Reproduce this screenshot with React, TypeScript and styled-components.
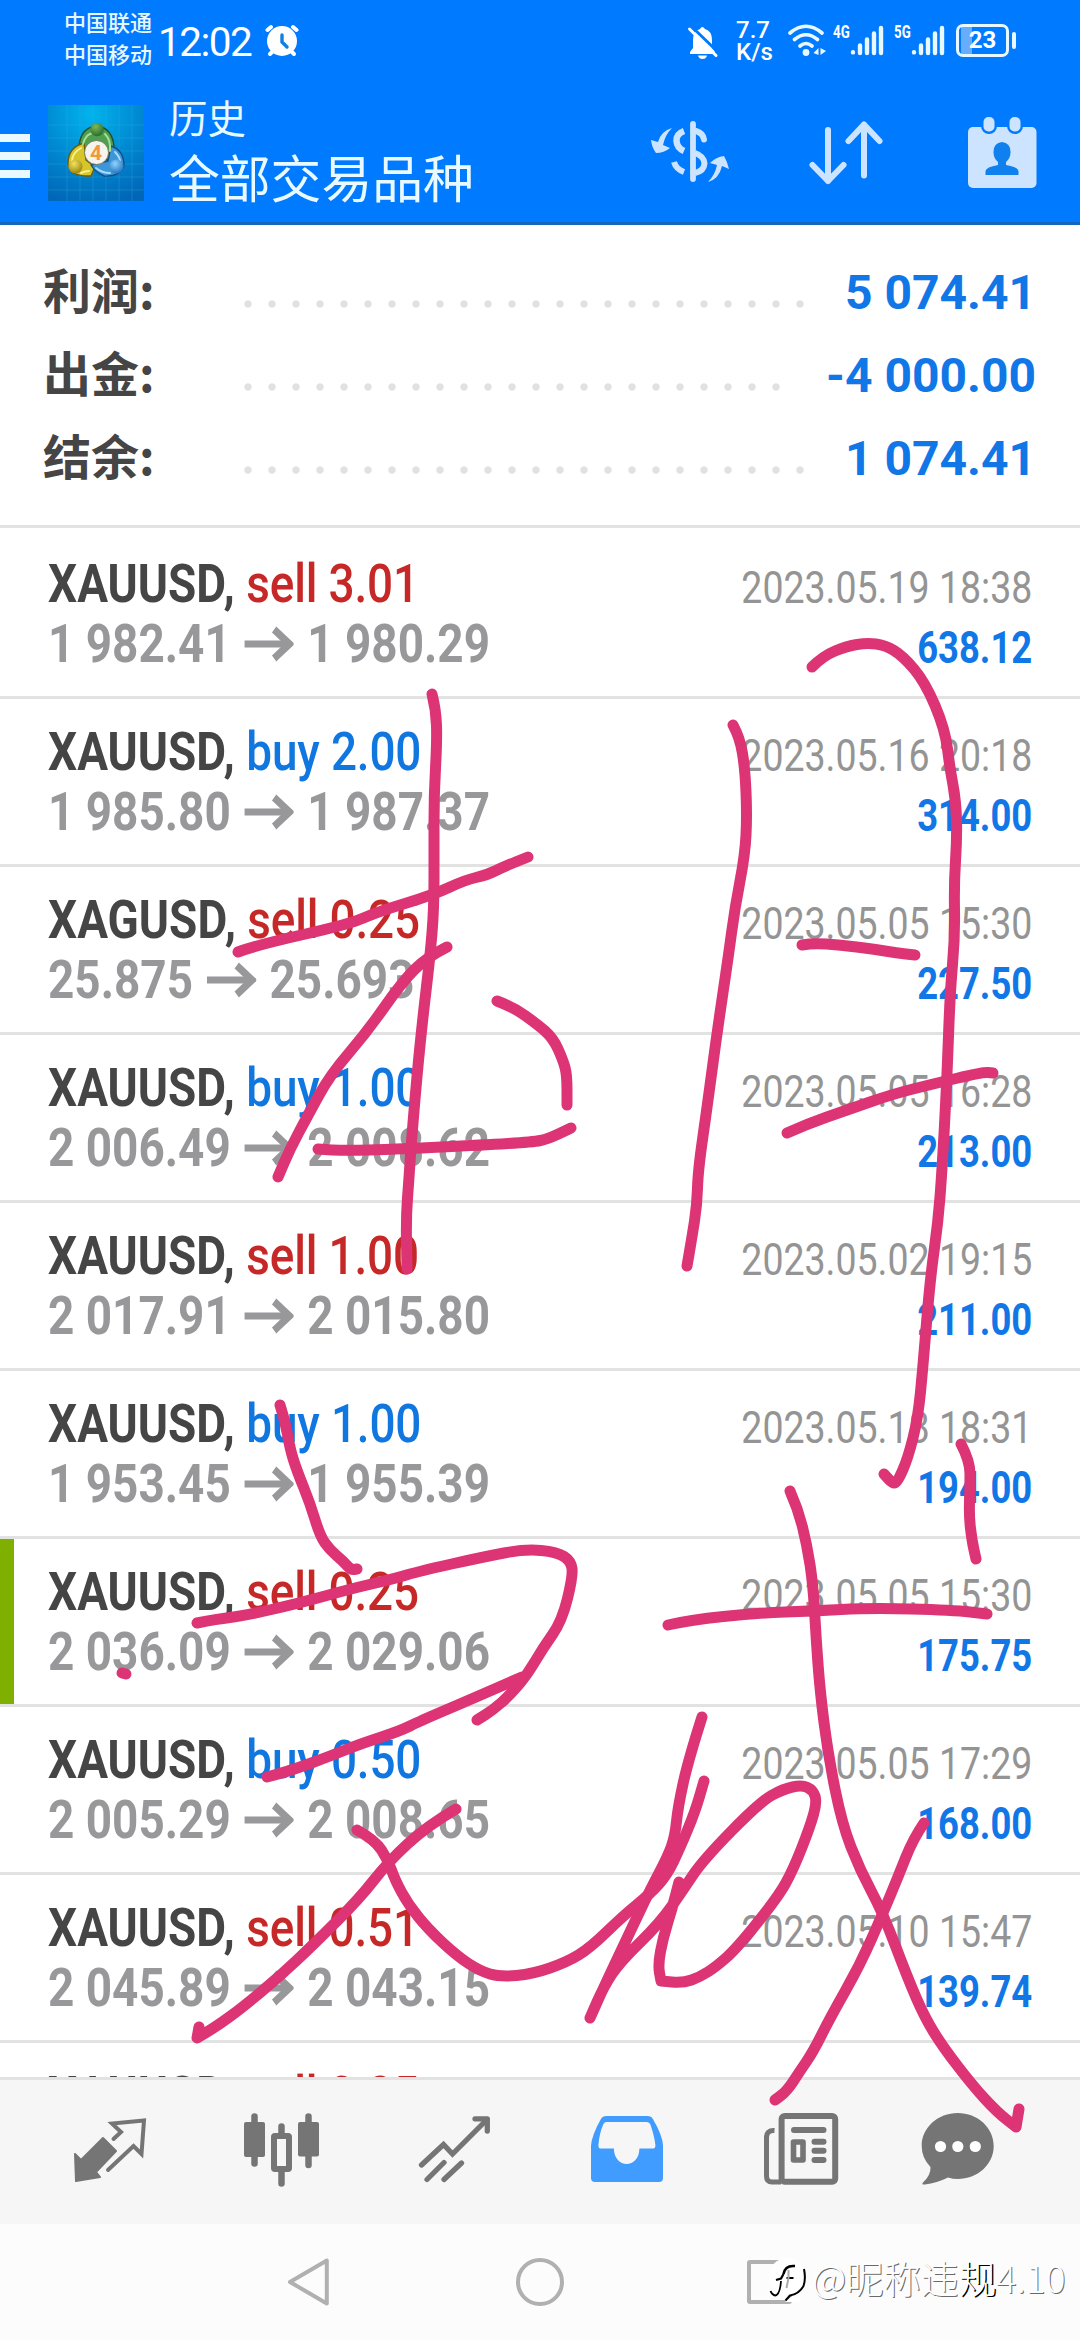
import React from "react";
import styled, { createGlobalStyle } from "styled-components";

const Global = createGlobalStyle`
  html, body { margin: 0; padding: 0; background: #fff; }
  * { box-sizing: border-box; }
  svg { display: block; flex: none; }
`;

const Screen = styled.div`
  position: relative;
  width: 1080px;
  height: 2340px;
  display: flex;
  flex-direction: column;
  overflow: hidden;
  background: #fff;
  font-family: Roboto, "Noto Sans CJK SC", sans-serif;
`;

/* ---------- header ---------- */
const Header = styled.header`
  height: 225px;
  flex: none;
  background: #007aff;
  border-bottom: 3px solid #1568bd;
  color: #fff;
`;
const StatusBar = styled.div`
  height: 84px;
  display: flex;
  align-items: flex-start;
  padding: 8px 0 0 64px;
`;
const Carriers = styled.div`
  width: 94px;
  font-size: 22px;
  line-height: 32px;
  font-weight: 500;
  color: #e8f8ff;
  white-space: nowrap;
`;
const Clock = styled.div`
  width: 107px;
  padding-top: 10px;
  font-size: 40.5px;
  line-height: 48px;
  letter-spacing: -1.5px;
`;
const AlarmWrap = styled.div`
  padding-top: 16px;
  width: 421px;
`;
const BellWrap = styled.div`
  padding-top: 16px;
  width: 50px;
`;
const Speed = styled.div`
  width: 51px;
  padding-top: 11px;
  font-size: 24px;
  line-height: 22px;
  font-weight: 500;
`;
const WifiWrap = styled.div`
  width: 46px;
  padding-top: 14px;
`;
const Signal = styled.div<{ $w: number }>`
  width: ${(p) => p.$w}px;
  display: flex;
  padding-top: 14px;
`;
const Gen = styled.span`
  width: 17px;
  font-size: 18.5px;
  line-height: 20px;
  font-weight: 700;
  transform: scaleX(0.72);
  transform-origin: 0 0;
`;
const Battery = styled.div`
  margin-top: 16px;
  width: 53px;
  height: 33px;
  border: 3px solid #e8f8ff;
  border-radius: 7px;
  display: flex;
  align-items: center;
  justify-content: center;
  font-size: 24px;
  font-weight: 700;
  line-height: 27px;
  background: linear-gradient(90deg, transparent 2px, #66aefc 2px, #66aefc 13px, transparent 13px);
`;
const BatteryTip = styled.div`
  margin: 24px 0 0 3px;
  width: 4px;
  height: 17px;
  border-radius: 2px;
  background: #e8f8ff;
`;
const AppBar = styled.div`
  height: 138px;
  display: flex;
  align-items: flex-start;
`;
const Burger = styled.div`
  width: 48px;
  padding-top: 50px;
  display: flex;
  flex-direction: column;
  gap: 10px;
`;
const BurgerLine = styled.span`
  width: 30px;
  height: 8px;
  background: #e8faff;
`;
const LogoWrap = styled.div`
  width: 121px;
  padding-top: 21px;
`;
const Titles = styled.div`
  width: 481px;
  padding-top: 8px;
  color: #e8faff;
`;
const Title = styled.div`
  font-size: 38.5px;
  line-height: 56px;
`;
const Subtitle = styled.div`
  font-size: 50.8px;
  line-height: 64px;
  margin-top: 1px;
`;
const Actions = styled.div`
  display: flex;
  gap: 76px;
  padding-top: 26px;
`;

/* ---------- totals ---------- */
const Totals = styled.section`
  height: 303px;
  flex: none;
  padding: 26px 0 0 43px;
  border-bottom: 3px solid #e2e2e2;
`;
const TotalRow = styled.div`
  height: 83px;
  display: flex;
  align-items: center;
`;
const TotalLabel = styled.div`
  width: 193px;
  font-family: "Noto Sans CJK SC", sans-serif;
  font-size: 48px;
  line-height: 70px;
  padding-bottom: 9px;
  font-weight: 700;
  color: #454545;
`;
const Dots = styled.div<{ $n: number }>`
  width: ${(p) => p.$n * 24}px;
  height: 10px;
  margin: 22px 0 0 0;
  background: radial-gradient(circle at 12px 5px, #e1e1e1 3.2px, transparent 4.2px) 0 0 / 24px 10px repeat-x;
`;
const TotalValue = styled.div<{ $gap: number }>`
  margin-left: ${(p) => p.$gap}px;
  font-size: 48px;
  line-height: 60px;
  font-weight: 700;
  color: #1177e6;
  white-space: nowrap;
`;

/* ---------- deals ---------- */
const List = styled.section`
  height: 1549px;
  flex: none;
  overflow: hidden;
  padding-top: 3px;
`;
const Deal = styled.article<{ $marked?: boolean }>`
  height: 168px;
  display: flex;
  justify-content: space-between;
  padding: 23px 48px 0 48px;
  border-bottom: 3px solid #e2e2e2;
  box-shadow: ${(p) => (p.$marked ? "inset 14px 0 0 #7fb000" : "none")};
`;
const Left = styled.div`
  transform: scaleX(0.85);
  transform-origin: 0 0;
  white-space: nowrap;
`;
const Right = styled.div`
  padding-top: 4px;
  text-align: right;
  white-space: nowrap;
`;
const Symbol = styled.div`
  font-size: 54px;
  line-height: 60px;
  font-weight: 700;
  color: #454545;
`;
const Side = styled.span<{ $buy: boolean }>`
  font-weight: 500;
  letter-spacing: -0.2px;
  color: ${(p) => (p.$buy ? "#1177e0" : "#c62828")};
`;
const Prices = styled.div`
  display: flex;
  align-items: center;
  font-size: 54px;
  line-height: 60px;
  font-weight: 700;
  color: #98989b;
`;
const PriceArrow = styled.svg`
  margin: 0 16px 0 16px;
`;
const When = styled.div`
  font-size: 45px;
  line-height: 60px;
  color: #949494;
  transform: scaleX(0.833);
  transform-origin: 100% 0;
`;
const Profit = styled.div`
  font-size: 45px;
  line-height: 59px;
  font-weight: 700;
  color: #1177e6;
  transform: scaleX(0.81);
  transform-origin: 100% 0;
`;

/* ---------- bottom ---------- */
const Tabs = styled.nav`
  height: 147px;
  flex: none;
  display: flex;
  gap: 92.4px;
  padding: 30px 0 0 70px;
  background: #f6f6f6;
  border-top: 3px solid #e2e2e2;
  & > svg:last-child { margin-left: -13.5px; }
`;
const SystemNav = styled.nav`
  flex: 1;
  background: #fcfcfc;
  display: flex;
  align-items: flex-start;
  padding: 28px 0 0 280px;
  gap: 170px;
`;
const Watermark = styled.div`
  position: absolute;
  left: 768px;
  top: 2250px;
  display: flex;
  align-items: center;
  font-family: "Noto Sans CJK SC", sans-serif;
  font-size: 37.5px;
  line-height: 54px;
  font-weight: 300;
  color: #fff;
  white-space: nowrap;
  text-shadow: 1px 1px 0 #6a6a6a;
`;
const WatermarkText = styled.span`
  margin-left: 4px;
`;
const Strong = styled.span`
  text-shadow: 1.5px 1px 0 #000;
`;
const Ink = styled.svg`
  position: absolute;
  left: 0;
  top: 0;
  pointer-events: none;
`;

type DealData = { s: string; side: string; vol: string; from: string; to: string; when: string; profit: string; marked?: boolean };
const deals: DealData[] = [
  { s: "XAUUSD", side: "sell", vol: "3.01", from: "1 982.41", to: "1 980.29", when: "2023.05.19 18:38", profit: "638.12" },
  { s: "XAUUSD", side: "buy", vol: "2.00", from: "1 985.80", to: "1 987.37", when: "2023.05.16 20:18", profit: "314.00" },
  { s: "XAGUSD", side: "sell", vol: "0.25", from: "25.875", to: "25.693", when: "2023.05.05 15:30", profit: "227.50" },
  { s: "XAUUSD", side: "buy", vol: "1.00", from: "2 006.49", to: "2 008.62", when: "2023.05.05 16:28", profit: "213.00" },
  { s: "XAUUSD", side: "sell", vol: "1.00", from: "2 017.91", to: "2 015.80", when: "2023.05.02 19:15", profit: "211.00" },
  { s: "XAUUSD", side: "buy", vol: "1.00", from: "1 953.45", to: "1 955.39", when: "2023.05.18 18:31", profit: "194.00" },
  { s: "XAUUSD", side: "sell", vol: "0.25", from: "2 036.09", to: "2 029.06", when: "2023.05.05 15:30", profit: "175.75", marked: true },
  { s: "XAUUSD", side: "buy", vol: "0.50", from: "2 005.29", to: "2 008.65", when: "2023.05.05 17:29", profit: "168.00" },
  { s: "XAUUSD", side: "sell", vol: "0.51", from: "2 045.89", to: "2 043.15", when: "2023.05.10 15:47", profit: "139.74" },
  { s: "XAUUSD", side: "sell", vol: "0.25", from: "", to: "", when: "", profit: "" },
];

const totals = [
  { label: "利润:", n: 24, gap: 33, value: "5 074.41" },
  { label: "出金:", n: 23, gap: 38, value: "-4 000.00" },
  { label: "结余:", n: 24, gap: 33, value: "1 074.41" },
];

const strokes = [
  "432,694 436,710 437,741 434,795 434,850 434,909 430,957 423,1016 417,1075 411,1147 409,1178 406,1218 407,1269",
  "238,952 257,945 350,924 377,912 433,895 465,880 487,875 503,867 528,857",
  "447,947 427,957 402,982 367,1032 330,1075 307,1117 290,1149 278,1177",
  "497,1001 513,1007 537,1024 553,1038 563,1060 567,1075 567,1105",
  "318,1149 337,1151 400,1149 483,1145 533,1142 548,1139 571,1128",
  "733,725 740,738 745,769 747,815 745,855 735,907 728,959 717,1033 707,1108 698,1171 697,1205 692,1237 687,1266",
  "812,667 823,656 847,646 867,643 885,645 903,656 925,682 945,729 950,769 956,801 957,838 954,884 955,936 950,993 947,1079 942,1171 938,1223 930,1280 923,1366 918,1418 908,1458 898,1481 893,1484 884,1474",
  "802,945 813,943 840,945 873,949 897,953 915,955",
  "787,1133 807,1124 847,1110 893,1094 933,1084 983,1072 993,1073",
  "961,1444 970,1461 970,1487 969,1516 972,1541 976,1559",
  "790,1491 798,1509 807,1545 813,1584 816,1637 820,1691 828,1754 842,1824 860,1870 883,1913 908,1979 925,2018 943,2047 973,2086 997,2112 1016,2127 1016,2127 1019,2109",
  "668,1625 690,1620 757,1613 813,1611 870,1608 953,1610 987,1614",
  "924,1823 913,1839 898,1877 883,1913 860,1965 830,2018 813,2052 800,2071 787,2091 775,2100",
  "702,1717 688,1761 678,1807 675,1836 668,1856 650,1890 627,1938 603,1989 590,2018 590,2018 604,1986 620,1962 660,1923 683,1890 703,1860 760,1802 783,1789 802,1785 813,1790 817,1802 810,1827 793,1870 778,1897 737,1948 717,1966 700,1977 683,1983 661,1981 661,1981 658,1965 663,1938 672,1909 679,1882",
  "357,1830 375,1840 388,1860 395,1880 408,1904 428,1929 457,1956 480,1971 500,1977 533,1974 567,1962 590,1948 623,1916 650,1894 667,1875 680,1848 695,1812 704,1781",
  "456,1809 427,1826 388,1862 360,1898 313,1945 280,1976 243,2007 217,2026 197,2038 197,2038 199,2027",
  "280,1405 285,1420 290,1449 297,1471 310,1503 320,1536 330,1550 343,1561 351,1570 357,1569",
  "197,1623 217,1619 243,1616 300,1603 350,1589 393,1579 420,1571 483,1557 525,1549 557,1552 571,1561 573,1576 562,1621 543,1648 527,1675 510,1695 493,1710 477,1720",
  "267,1777 287,1772 333,1755 360,1744 400,1731 420,1721 467,1701 522,1677",
  "122,1673 126,1674",
];

// Runs a quadratic through the midpoints of the sampled pen positions.
function smooth(points: string): string {
  const p = points.split(" ").map((s) => s.split(",").map(Number));
  let d = `M${p[0][0]} ${p[0][1]}`;
  for (let i = 1; i < p.length - 1; i++) {
    d += `Q${p[i][0]} ${p[i][1]} ${(p[i][0] + p[i + 1][0]) / 2} ${(p[i][1] + p[i + 1][1]) / 2}`;
  }
  const last = p[p.length - 1];
  return d + `L${last[0]} ${last[1]}`;
}

const Arrow = () => (
  <PriceArrow width="58" height="40" viewBox="0 0 58 40" fill="none" stroke="#98989b" strokeWidth="7">
    <path d="M0 20H52" />
    <path d="M35 5.500L53 20L35 34.500" strokeWidth="8" />
  </PriceArrow>
);

const Bars = () => (
  <svg width="34" height="34" viewBox="0 0 34 34" stroke="#e8f8ff" strokeWidth="4.4" strokeLinecap="round">
    <path d="M3 30.4V30.2M10 23.5V31M17 17.5V31M24 11.5V31M31 6V31" />
  </svg>
);

const AppLogo = () => (
  <svg width="96" height="96" viewBox="0 0 96 96">
    <defs>
      <radialGradient id="sky" cx="0.45" cy="0.1" r="0.95">
        <stop offset="0" stopColor="#00b4ee" />
        <stop offset="0.5" stopColor="#008bd2" />
        <stop offset="1" stopColor="#0067b8" />
      </radialGradient>
      <radialGradient id="green" cx="0.4" cy="0.3" r="0.8"><stop offset="0" stopColor="#7db85e" /><stop offset="1" stopColor="#1f6224" /></radialGradient>
      <radialGradient id="gold" cx="0.4" cy="0.3" r="0.8"><stop offset="0" stopColor="#f3e25a" /><stop offset="1" stopColor="#8f7a08" /></radialGradient>
      <radialGradient id="blue" cx="0.4" cy="0.3" r="0.8"><stop offset="0" stopColor="#8fd4ff" /><stop offset="1" stopColor="#1668b8" /></radialGradient>
    </defs>
    <rect width="96" height="96" fill="url(#sky)" />
    <path d="M0 20H96M0 33H96M0 46H96M0 59H96M0 72H96M0 85H96M19 0V96M32 0V96M45 0V96M58 0V96M71 0V96M84 0V96" stroke="#36b1e6" strokeOpacity="0.3" />
    <g strokeWidth="1.4" strokeLinejoin="round">
      <path d="M31 41Q33 22 49 21Q64 23 66 41Q65 50 60 55L36 44Z" fill="#4f9f51" stroke="#1f5226" />
      <path d="M36 38Q20 42 20 59Q22 72 43 71L47 62L38 55Z" fill="#d6c62a" stroke="#6b5c0a" />
      <path d="M63 41Q76 45 76 61Q72 72 56 71Q47 67 43 60L60 56Z" fill="#3d96d8" stroke="#164e83" />
    </g>
    <g fill="none" strokeWidth="2" strokeLinecap="round">
      <path d="M35 39Q38 28 46 28M57 29Q63 35 62 46" stroke="#a9dc98" />
      <path d="M33 43Q24 48 24 56M33 68Q37 66 41 66" stroke="#f8f08c" />
      <path d="M67 47Q73 53 72 58M48 63Q54 68 62 68" stroke="#a4dcff" />
    </g>
    <circle cx="49" cy="24.500" r="6.800" fill="url(#green)" />
    <circle cx="27.500" cy="61.500" r="7" fill="url(#gold)" />
    <circle cx="68.500" cy="61.500" r="7" fill="url(#blue)" />
    <circle cx="48.500" cy="47.500" r="12" fill="#f7f4f0" stroke="#6a6a45" strokeWidth="0.8" />
    <text x="48" y="55" textAnchor="middle" fontFamily="Roboto" fontSize="21" fontWeight="700" fill="#f09a3c">4</text>
  </svg>
);

export default function App() {
  return (
    <Screen>
      <Global />
      <Header>
        <StatusBar>
          <Carriers>
            <div>中国联通</div>
            <div>中国移动</div>
          </Carriers>
          <Clock>12:02</Clock>
          <AlarmWrap>
            <svg width="34" height="34" viewBox="264 24 34 34" fill="none" stroke="#fff" strokeLinecap="round">
              <circle cx="281" cy="41" r="15" fill="#fff" stroke="none" />
              <path d="M266.500 30L270 27M295.500 30L292 27" strokeWidth="4" />
              <path d="M269 54L271 52M293 54L291 52" strokeWidth="4" />
              <path d="M281 35V42L286 47" stroke="#1180e0" strokeWidth="3.4" />
            </svg>
          </AlarmWrap>
          <BellWrap>
            <svg width="34" height="36" viewBox="685 22 34 36">
              <path d="M689 52V50L692 46V38Q692 29 699 27Q701 23 704 27Q711 29 711 38V46L714 50V52Z" fill="#fff" />
              <path d="M697 53.500H706Q705 57 701.500 57Q698 57 697 53.500Z" fill="#fff" />
              <path d="M690 24L718 51" stroke="#007aff" strokeWidth="3" />
              <path d="M688.500 27L715 53.500" stroke="#fff" strokeWidth="3" strokeLinecap="round" />
            </svg>
          </BellWrap>
          <Speed>
            <div>7.7</div>
            <div>K/s</div>
          </Speed>
          <WifiWrap>
            <svg width="40" height="36" viewBox="787 22 40 36" fill="none" stroke="#e8f8ff" strokeWidth="3.600" strokeLinecap="round">
              <path d="M790 33Q806 19.500 822 33M794.500 39.500Q806 30 817.500 39.500M800 46Q806 41 812 46" />
              <circle cx="806" cy="52.500" r="3.400" fill="#e8f8ff" stroke="none" />
              <path d="M818.500 48V55L813.500 53ZM820.500 48V55L826 51Z" fill="#e8f8ff" stroke="none" />
            </svg>
          </WifiWrap>
          <Signal $w={61}>
            <Gen>4G</Gen>
            <Bars />
          </Signal>
          <Signal $w={62}>
            <Gen>5G</Gen>
            <Bars />
          </Signal>
          <Battery>23</Battery>
          <BatteryTip />
        </StatusBar>
        <AppBar>
          <Burger>
            <BurgerLine />
            <BurgerLine />
            <BurgerLine />
          </Burger>
          <LogoWrap>
            <AppLogo />
          </LogoWrap>
          <Titles>
            <Title>历史</Title>
            <Subtitle>全部交易品种</Subtitle>
          </Titles>
          <Actions>
            <svg width="80" height="80" viewBox="650 110 80 80" fill="none" stroke="#cce4ff">
              <path d="M693 124V179" strokeWidth="5.800" strokeLinecap="round" />
              <path d="M684 131Q676 134 676.500 141Q677 148 684 151" strokeWidth="6.500" />
              <path d="M696 131Q703 133 704 139.500" strokeWidth="6" strokeLinecap="round" />
              <path d="M674 162Q676 169 684 172" strokeWidth="6" />
              <path d="M695 153Q704 156 704.500 163.500Q704 171 695 173" strokeWidth="6" />
              <path d="M672 128Q661 131 658 142L651 140Q652 148 656 153Q664 153 670 148L663 145Q665 135 672 128Z" fill="#cce4ff" stroke="none" />
              <path d="M708 182Q719 179 722 166L729 169Q727 161 724 156Q716 157 710 163L717 165Q715 175 708 182Z" fill="#cce4ff" stroke="none" />
            </svg>
            <svg width="80" height="80" viewBox="806 110 80 80" fill="none" stroke="#cce4ff" strokeWidth="6" strokeLinecap="round" strokeLinejoin="round">
              <path d="M828 130V181M812.500 165L828 181L843.500 165" />
              <path d="M864 175.500V124.500M848.500 141L864 124.500L879.500 141" />
            </svg>
            <svg width="80" height="80" viewBox="962 110 80 80">
              <rect x="968" y="127" width="68.500" height="61" rx="5" fill="#cce4ff" />
              <g fill="#007aff">
                <rect x="981" y="113" width="16" height="21" rx="8" />
                <rect x="1007" y="113" width="16" height="21" rx="8" />
              </g>
              <g fill="#cce4ff">
                <rect x="983.500" y="117" width="11" height="14.500" rx="5" />
                <rect x="1009.500" y="117" width="11" height="14.500" rx="5" />
              </g>
              <path d="M1002 142Q1011 143 1010.500 153Q1010 159 1006 162V165Q1018 167 1018.500 171V175H985.500V171Q986 167 998 165V162Q994 159 993.500 153Q993 143 1002 142Z" fill="#1180ef" />
            </svg>
          </Actions>
        </AppBar>
      </Header>

      <Totals>
        {totals.map((t) => (
          <TotalRow key={t.label}>
            <TotalLabel>{t.label}</TotalLabel>
            <Dots $n={t.n} />
            <TotalValue $gap={t.gap}>{t.value}</TotalValue>
          </TotalRow>
        ))}
      </Totals>

      <List>
        {deals.map((d, i) => (
          <Deal key={i} $marked={d.marked}>
            <Left>
              <Symbol>
                {d.s}, <Side $buy={d.side === "buy"}>{d.side} {d.vol}</Side>
              </Symbol>
              {d.from && (
                <Prices>
                  {d.from}
                  <Arrow />
                  {d.to}
                </Prices>
              )}
            </Left>
            {d.when && (
              <Right>
                <When>{d.when}</When>
                <Profit>{d.profit}</Profit>
              </Right>
            )}
          </Deal>
        ))}
      </List>

      <Tabs>
        <svg width="80" height="80" viewBox="70 2110 80 80" fill="none" stroke="#757575" strokeLinejoin="round" strokeLinecap="round">
          <path d="M75 2154L81 2160L103 2138L116 2151L96 2172L100 2177L76 2181Z" fill="#757575" strokeWidth="2" />
          <path d="M113.500 2139L121 2132L112 2123.500L144 2120.500L141.500 2154L133.500 2146L108 2170" strokeWidth="4" strokeLinejoin="miter" />
        </svg>
        <svg width="80" height="80" viewBox="242 2110 80 80" fill="none" stroke="#757575" strokeWidth="6.500" strokeLinecap="round">
          <path d="M254.500 2116.500V2163.500M281.500 2126.500V2135M281.500 2170V2183.500M308.500 2116.500V2165" />
          <rect x="244" y="2122" width="21" height="35" rx="2" fill="#757575" stroke="none" />
          <rect x="298" y="2122" width="21" height="34.500" rx="2" fill="#757575" stroke="none" />
          <rect x="274" y="2136" width="15" height="33" rx="1" strokeWidth="6" />
        </svg>
        <svg width="80" height="80" viewBox="414 2110 80 80" fill="none" stroke="#757575" strokeWidth="5.300" strokeLinecap="round">
          <path d="M420.500 2165L442.500 2144.500L451.500 2154L486 2119.500" />
          <path d="M474 2118.800H486.300V2131" strokeLinejoin="round" />
          <path d="M426 2179.500L443 2162.500M443 2179.500L460.500 2163" />
        </svg>
        <svg width="80" height="80" viewBox="586.600 2110 80 80">
          <path fillRule="evenodd" fill="#409cff" d="M606 2116H647Q651 2116 652.500 2119Q662.500 2136 662.600 2146V2178Q662.600 2182 658.600 2182H594.600Q590.600 2182 590.600 2178V2146Q591 2136 600.500 2119Q602 2116 606 2116ZM606 2122Q604 2122 603 2124Q599 2133 598 2145Q598 2148.500 600 2148.500H613.500C613.500 2169 639 2169 639 2148.500H653Q655 2148.500 655 2145Q654 2136 650 2124.500Q649 2122 646.500 2122Z" />
        </svg>
        <svg width="80" height="80" viewBox="759 2110 80 80" fill="none" stroke="#757575" strokeWidth="6">
          <rect x="780.600" y="2116" width="53.600" height="65.700" rx="3" />
          <path d="M773.500 2130.500Q765.500 2130 765.500 2138V2176Q765.500 2182 771 2182H780" strokeWidth="5" />
          <path d="M793 2130H822.500M813.500 2141.800H822.500M813.500 2150.800H822.500M813.500 2160H822.500" strokeLinecap="round" />
          <rect x="792.500" y="2142" width="9.500" height="18" strokeWidth="5.600" strokeLinejoin="round" />
        </svg>
        <svg width="80" height="80" viewBox="918 2110 80 80" fill="#757575">
          <path d="M957.700 2113C977.500 2113 993.700 2127.500 993.700 2146S977.500 2179 957.700 2179Q953 2179 948 2177.500Q937 2183 925 2184.500Q921 2185 923 2182.500Q931 2175 930.500 2167Q921.700 2158 921.700 2146C921.700 2127.500 938 2113 957.700 2113Z" />
          <g fill="#fff">
            <circle cx="940.500" cy="2146.500" r="5.600" />
            <circle cx="957.800" cy="2146.500" r="5.600" />
            <circle cx="975.300" cy="2146.500" r="5.600" />
          </g>
        </svg>
      </Tabs>

      <SystemNav>
        <svg width="60" height="60" viewBox="280 2252 60 60" fill="none" stroke="#b0b0b0" strokeWidth="4" strokeLinejoin="round">
          <path d="M290 2282L326.800 2260.500V2303.500Z" />
        </svg>
        <svg width="60" height="60" viewBox="510 2252 60 60" fill="none" stroke="#b0b0b0" strokeWidth="4">
          <circle cx="540" cy="2282" r="22" />
        </svg>
        <svg width="60" height="60" viewBox="740 2252 60 60" fill="none" stroke="#b0b0b0" strokeWidth="4">
          <rect x="749" y="2262" width="41" height="40" rx="1" />
        </svg>
      </SystemNav>

      <Ink width="1080" height="2340" viewBox="0 0 1080 2340" fill="none" stroke="#dc3474" strokeWidth="11" strokeLinecap="round" strokeLinejoin="round">
        {strokes.map((s, i) => (
          <path key={i} d={smooth(s)} />
        ))}
      </Ink>

      <Watermark>
        <svg width="40" height="48" viewBox="768 2255 40 48" overflow="visible">
          <path d="M787 2260Q804.500 2261 805 2279Q804 2296 791 2299L785 2304H800V2299L785 2297Q770 2296 769.500 2280Q770 2261 787 2260Z" fill="#fff" />
          <path d="M804 2271Q806 2281 803.500 2288Q799 2296 790 2297.500L785.500 2302.500" fill="none" stroke="#000" strokeWidth="2" />
          <g fill="none" stroke="#000">
            <path d="M795 2268Q785 2267 783.500 2276" strokeWidth="2.500" />
            <path d="M776 2282L781 2280.500L783.500 2276M786.500 2280H793.500" strokeWidth="2.200" />
            <path d="M781 2283Q780 2297 775 2297.500Q772 2297 770.500 2293" strokeWidth="1.800" />
            <path d="M788.500 2272V2280L786.500 2290" stroke="#aaa" strokeWidth="2" />
          </g>
        </svg>
        <WatermarkText>@昵称违<Strong>规</Strong>4.10</WatermarkText>
      </Watermark>
    </Screen>
  );
}
